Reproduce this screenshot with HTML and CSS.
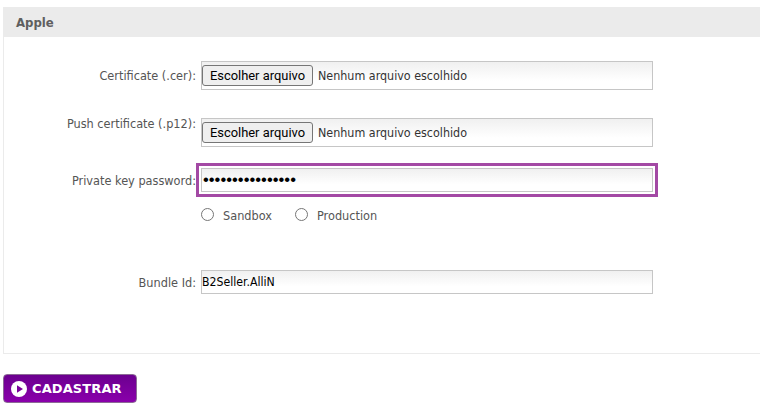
FILE: index.html
```html
<!DOCTYPE html>
<html lang="pt">
<head>
<meta charset="utf-8">
<title>Apple</title>
<link rel="stylesheet" href="styles.css">
</head>
<body>
<form class="page">
  <section class="panel">
    <h2 class="panel-title">Apple</h2>
    <div class="panel-body">
      <div class="row row-cer">
        <label class="label">Certificate (.cer):</label>
        <div class="field file-field">
          <button type="button" class="file-button">Escolher arquivo</button>
          <span class="file-name">Nenhum arquivo escolhido</span>
        </div>
      </div>
      <div class="row row-push">
        <label class="label label-top">Push certificate (.p12):</label>
        <div class="field file-field">
          <button type="button" class="file-button">Escolher arquivo</button>
          <span class="file-name">Nenhum arquivo escolhido</span>
        </div>
      </div>
      <div class="row row-pass">
        <label class="label" for="pw">Private key password:</label>
        <input id="pw" class="field text-field focused" type="password" value="1234567890123456">
      </div>
      <div class="row row-radio">
        <span class="label"></span>
        <div class="radios">
          <label class="radio"><span class="radio-mark"></span>Sandbox</label>
          <label class="radio"><span class="radio-mark"></span>Production</label>
        </div>
      </div>
      <div class="row row-bundle">
        <label class="label" for="bundle">Bundle Id:</label>
        <input id="bundle" class="field text-field" type="text" value="B2Seller.AlliN">
      </div>
    </div>
  </section>
  <button type="button" class="submit">
    <svg class="submit-icon" viewBox="0 0 16 16" width="16" height="16" aria-hidden="true">
      <circle cx="8" cy="8" r="8" fill="#fff"/>
      <path d="M6 4.2 L12 8 L6 11.8 Z" fill="#7a009c"/>
    </svg>
    CADASTRAR
  </button>
</form>
</body>
</html>
```

FILE: styles.css
```css
html, body {
  margin: 0;
  padding: 0;
  background: #fff;
  overflow: hidden;
}

.page {
  padding: 7px 0 0 3px;
  font-family: "DejaVu Sans", Verdana, sans-serif;
  font-stretch: condensed;
  font-size: 12.6px;
  color: #555;
}

.panel {
  border: 1px solid #ebebeb;
  border-top: 0;
  border-right: 0;
  height: 347px;
  box-sizing: border-box;
}

.panel-title {
  margin: 0 0 0 -1px;
  height: 30px;
  padding-left: 13px;
  background: #ebebeb;
  font-size: 13px;
  font-weight: bold;
  line-height: 31px;
  color: #5f5f5f;
}

.panel-body {
  padding-top: 24px;
}

.row {
  display: flex;
  align-items: center;
}

.row-cer { height: 29px; }
.row-push { height: 29px; margin-top: 28px; }
.row-pass { height: 24px; margin-top: 21px; }
.row-radio { height: 20px; margin-top: 13px; }
.row-bundle { height: 24px; margin-top: 45px; }

.label {
  width: 197px;
  flex: none;
  text-align: right;
  padding-right: 5px;
  box-sizing: border-box;
  white-space: nowrap;
}

.label-top {
  align-self: flex-start;
  margin-top: -2px;
}

.field {
  width: 452px;
  box-sizing: border-box;
  border: 1px solid #c6c6c6;
  background: linear-gradient(#f0f0f0, #fff 70%);
  margin: 0;
  flex: none;
}

.file-field {
  height: 29px;
  display: flex;
  align-items: center;
  color: #333;
  font-size: 12.4px;
}

.file-button {
  width: 111px;
  height: 21px;
  margin: 0;
  padding: 0;
  border: 1px solid #767676;
  border-radius: 3px;
  background: #efefef;
  color: #000;
  font-family: Roboto, Arial, sans-serif;
  font-size: 12.9px;
}

.file-name {
  margin-left: 5px;
}

.text-field {
  height: 24px;
  padding: 0;
  color: #000;
  font-family: "DejaVu Sans", Verdana, sans-serif;
  font-stretch: condensed;
  font-size: 12.2px;
}

.focused {
  outline: 3px solid #a349a4;
  outline-offset: 2px;
  padding-left: 1px;
  font-family: "Liberation Sans", Arial, sans-serif;
  font-stretch: normal;
  font-size: 16.6px;
}

.radios {
  display: flex;
  gap: 23px;
}

.radio {
  display: flex;
  align-items: center;
}

.radio-mark {
  width: 11px;
  height: 11px;
  border: 1px solid #767676;
  border-radius: 50%;
  margin-right: 9px;
  margin-top: -2px;
  background: #fff;
}

.submit {
  display: flex;
  align-items: center;
  gap: 5px;
  width: 134px;
  height: 29px;
  margin: 20px 0 0 0;
  padding: 0 0 0 7px;
  box-sizing: border-box;
  border: 1px solid #8c6a96;
  border-radius: 4px;
  background: linear-gradient(#6b008f, #8a00ab);
  color: #fff;
  font-family: "DejaVu Sans", Verdana, sans-serif;
  font-size: 13px;
  letter-spacing: 0.1px;
  font-weight: bold;
}

.submit-icon {
  flex: none;
}
```
